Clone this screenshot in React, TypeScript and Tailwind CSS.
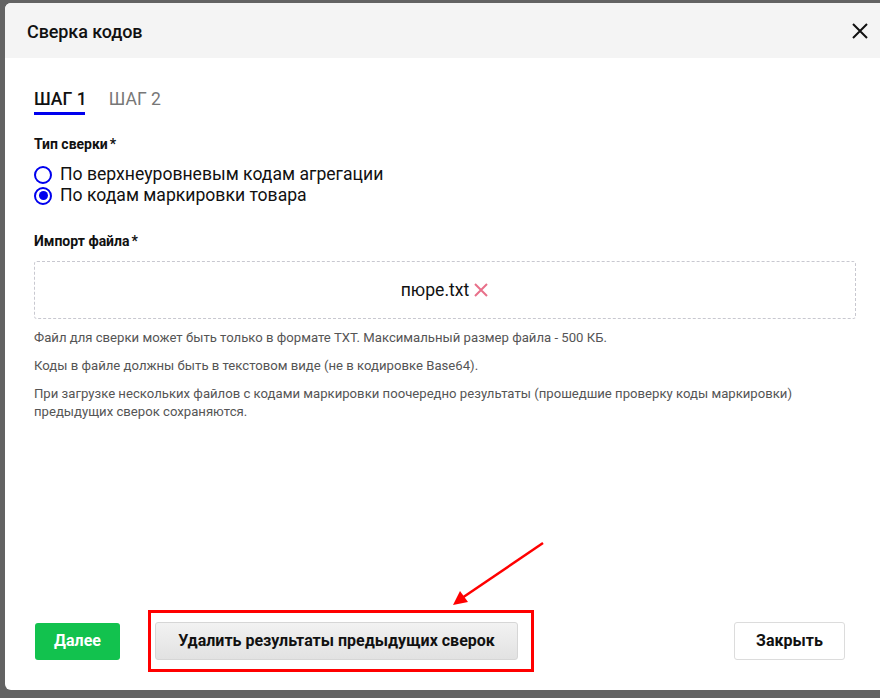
import React from "react";

export default function App() {
  return (
    <div className="relative w-[880px] h-[698px] overflow-hidden bg-[#636363] pt-[3px] pl-[5px]" style={{ fontFamily: "Roboto, 'Noto Sans', sans-serif" }}>
      <div className="w-[890px] h-[687px] bg-white rounded-[6px] flex flex-col overflow-hidden">
        <div className="h-[55px] bg-[#f4f4f4] flex items-center pl-[22px] pr-[15px] shrink-0">
          <div className="text-[18px] font-medium text-[#111] tracking-[-0.1px] mt-[1px]">Сверка кодов</div>
          <div className="ml-auto mr-[10px] w-[20px] flex items-center justify-center mt-[1px]">
            <svg width="18" height="18" viewBox="0 0 18 18">
              <path d="M2 2L16 16M16 2L2 16" stroke="#111" strokeWidth="2" />
            </svg>
          </div>
        </div>
        <div className="pl-[29px] pr-[39px] pt-[31px] flex flex-col flex-1">
          <div className="flex items-start gap-[22px] h-[25px]">
            <div className="flex flex-col">
              <span className="text-[17.6px] font-medium text-[#111] leading-[20px]">ШАГ 1</span>
              <span className="mt-[3px] h-[3px] w-[51px] bg-[#0000ee]" />
            </div>
            <span className="text-[17.6px] text-[#777] leading-[20px]">ШАГ 2</span>
          </div>
          <div className="mt-[21px] text-[14px] font-bold text-[#111] leading-[18px]">
            Тип сверки<span className="ml-[2px]">*</span>
          </div>
          <div className="mt-[11px] flex flex-col">
            <label className="flex items-center gap-[8px] h-[21px]">
              <span className="w-[18px] h-[18px] rounded-full border-[2.5px] border-[#0000ee] bg-white" />
              <span className="text-[17.6px] text-[#111]">По верхнеуровневым кодам агрегации</span>
            </label>
            <label className="flex items-center gap-[8px] h-[21px]">
              <span className="w-[18px] h-[18px] rounded-full border-[2.5px] border-[#0000ee] bg-white flex items-center justify-center">
                <span className="w-[9px] h-[9px] rounded-full bg-[#0000ee]" />
              </span>
              <span className="text-[17.6px] text-[#111]">По кодам маркировки товара</span>
            </label>
          </div>
          <div className="mt-[26px] text-[14px] font-bold text-[#111] leading-[18px]">
            Импорт файла<span className="ml-[2px]">*</span>
          </div>
          <div className="mt-[11px] h-[58px] border border-dashed border-[#c8c8d0] rounded-[3px] flex items-center justify-center gap-[4px]">
            <span className="text-[17.6px] text-[#111]">пюре.txt</span>
            <svg width="16" height="16" viewBox="0 0 16 16">
              <path d="M2 2L14 14M14 2L2 14" stroke="#e8708a" strokeWidth="2" />
            </svg>
          </div>
          <div className="mt-[10px] text-[13.15px] text-[#555] leading-[18px] flex flex-col gap-[10px]">
            <p>Файл для сверки может быть только в формате TXT. Максимальный размер файла - 500 КБ.</p>
            <p>Коды в файле должны быть в текстовом виде (не в кодировке Base64).</p>
            <p>При загрузке нескольких файлов с кодами маркировки поочередно результаты (прошедшие проверку коды маркировки) предыдущих сверок сохраняются.</p>
          </div>
          <div className="mt-auto mb-[18px] flex items-center">
            <button className="w-[85px] h-[37px] bg-[#12c24e] rounded-[3px] text-white font-bold text-[16px] ml-[1px]">Далее</button>
            <div className="ml-[28px] border-[3px] border-[#ff0000] pl-[4px] pr-[13px] py-[9px]">
              <button className="w-[363px] h-[38px] rounded-[3px] border border-[#d6d6d6] bg-gradient-to-b from-[#f2f2f2] to-[#e2e2e2] text-[#111] font-bold text-[16px]">Удалить результаты предыдущих сверок</button>
            </div>
            <button className="ml-auto mr-[11px] w-[111px] h-[38px] rounded-[3px] border border-[#dcdcdc] bg-white text-[#111] font-bold text-[16px]">Закрыть</button>
          </div>
        </div>
      </div>
      <svg className="absolute left-0 top-0 pointer-events-none" width="880" height="698">
        <line x1="543" y1="543" x2="462" y2="598" stroke="#ff0000" strokeWidth="2.5" />
        <polygon points="453,605 460,591 468,602" fill="#ff0000" />
      </svg>
    </div>
  );
}
